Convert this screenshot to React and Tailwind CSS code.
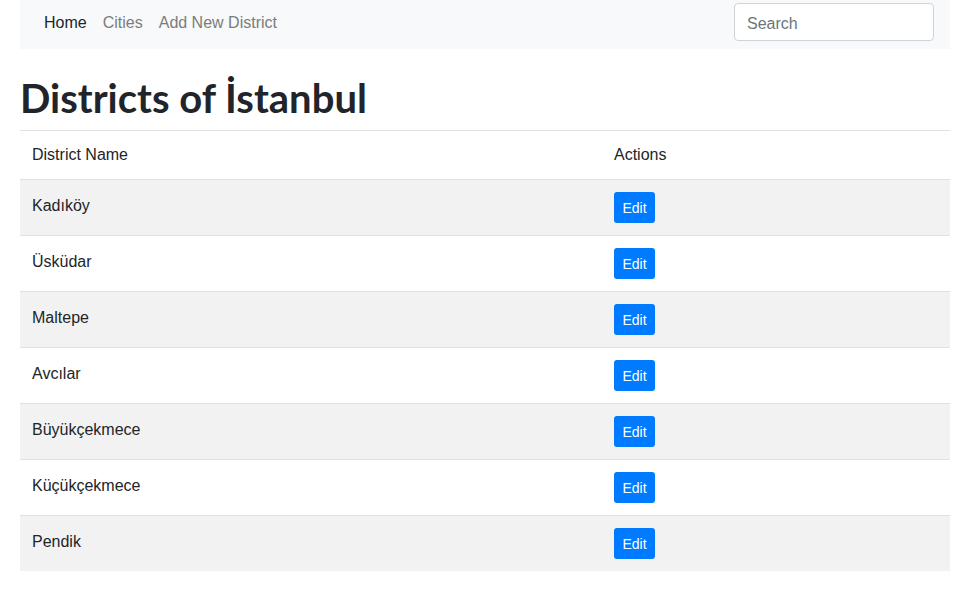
import React from 'react';

const districts = [
  'Kadıköy',
  'Üsküdar',
  'Maltepe',
  'Avcılar',
  'Büyükçekmece',
  'Küçükçekmece',
  'Pendik',
];

function NavBar() {
  return (
    <nav className="flex h-[49px] items-start justify-between bg-[#f8f9fa] pl-4 pr-4">
      <ul className="mt-[11px] flex items-center text-base leading-6">
        <li>
          <a href="#" className="block px-2 text-[#212529]">Home</a>
        </li>
        <li>
          <a href="#" className="block px-2 text-[#7b7c7d]">Cities</a>
        </li>
        <li>
          <a href="#" className="block px-2 text-[#7b7c7d]">Add New District</a>
        </li>
      </ul>
      <input
        type="search"
        placeholder="Search"
        className="mt-[3px] h-[38px] w-[200px] rounded border border-[#ced4da] bg-white px-3 pt-[3px] text-base text-[#495057] placeholder:text-[#6c757d] focus:outline-none"
      />
    </nav>
  );
}

export default function App() {
  return (
    <div className="min-h-[589px] bg-white font-['Liberation_Sans',Arial,sans-serif] text-[#212529]">
      <div className="ml-[20px] w-[930px]">
        <NavBar />

        <h1 className="mt-[25px] mb-[8px] font-['Lato',sans-serif] text-[40px] font-bold leading-[48px] text-[#212529]">
          Districts of İstanbul
        </h1>

        <table className="w-full border-collapse text-base leading-6">
          <thead>
            <tr className="border-t border-[#dee2e6]">
              <th className="w-[582px] p-3 text-left font-normal">District Name</th>
              <th className="p-3 text-left font-normal">Actions</th>
            </tr>
          </thead>
          <tbody>
            {districts.map((name, i) => (
              <tr
                key={name}
                className={`border-t border-[#dee2e6] ${i % 2 === 0 ? 'bg-[#f2f2f2]' : 'bg-white'}`}
              >
                <td className="p-3 align-top">
                  <span className="relative top-[2px]">{name}</span>
                </td>
                <td className="p-3 align-top">
                  <button className="block h-[31px] w-[41px] rounded-[3px] bg-[#007bff] pt-[1px] text-sm leading-[21px] text-white">
                    Edit
                  </button>
                </td>
              </tr>
            ))}
          </tbody>
        </table>
      </div>
    </div>
  );
}
